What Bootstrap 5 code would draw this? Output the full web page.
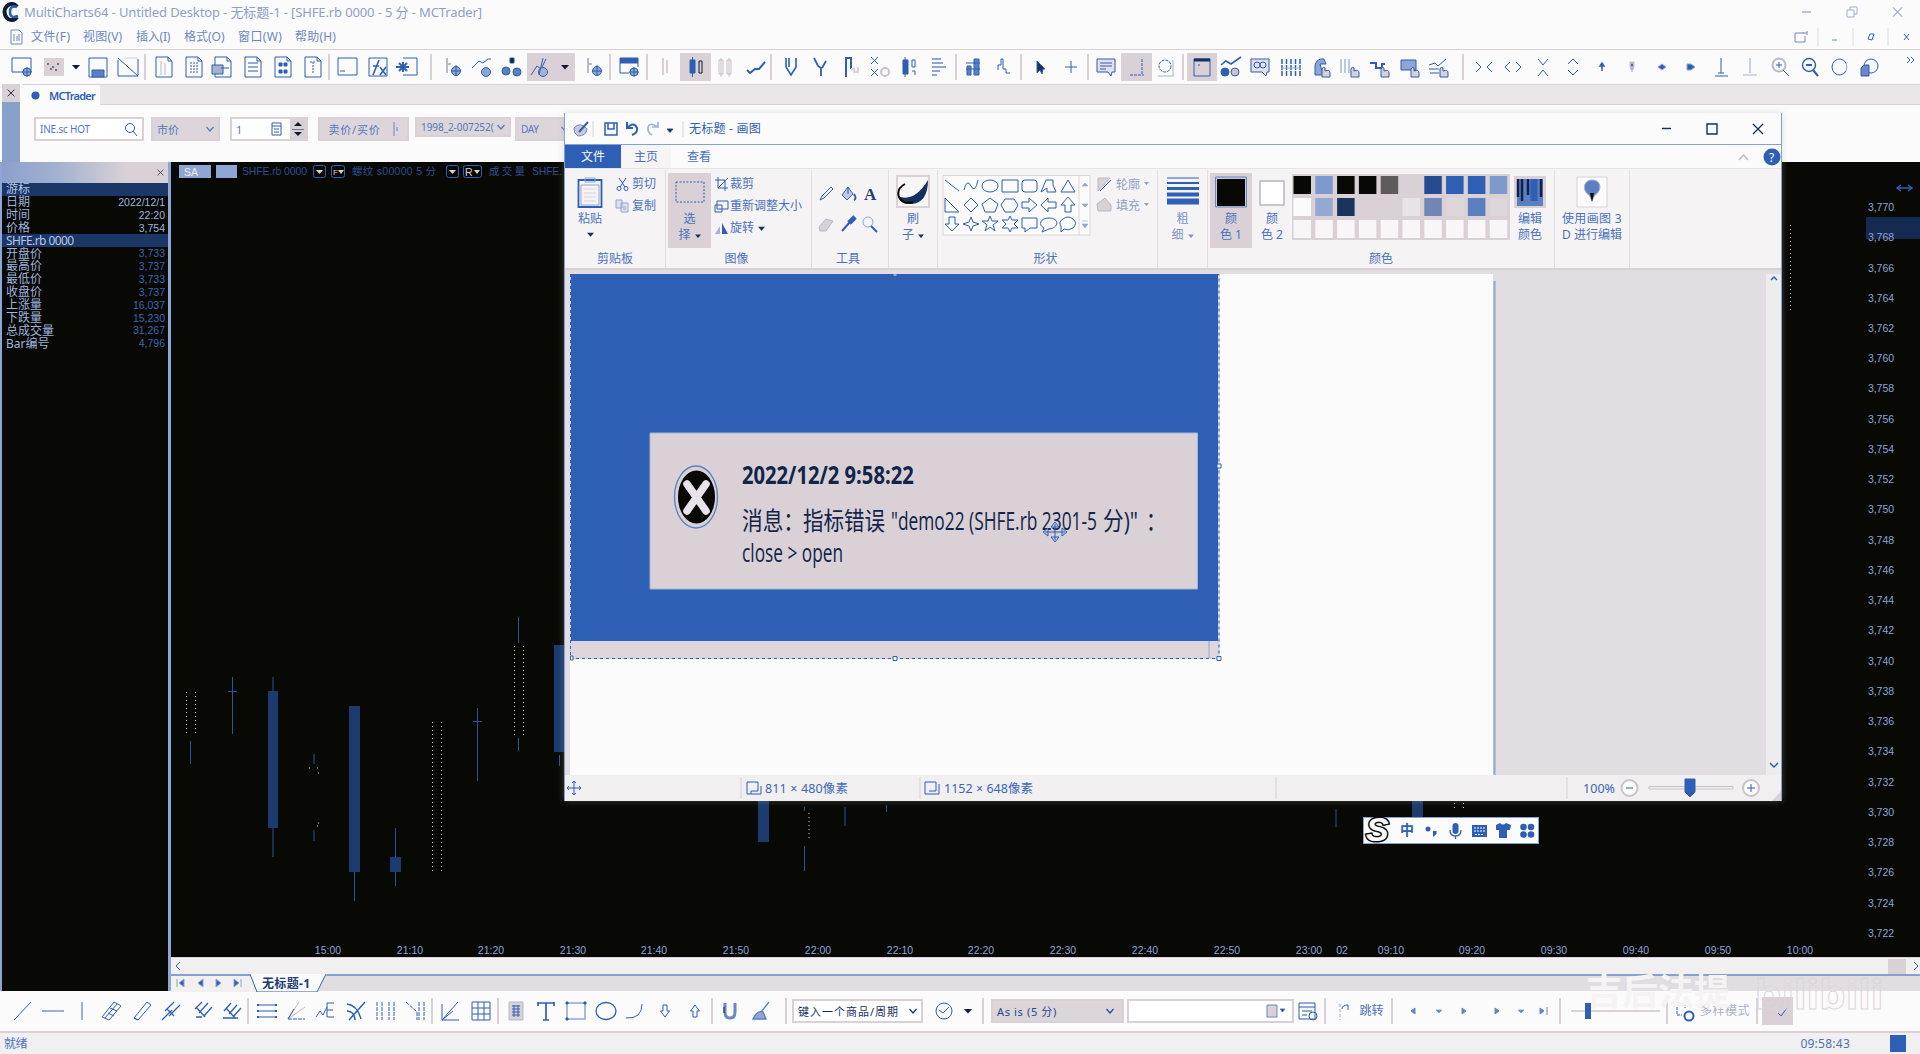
<!DOCTYPE html>
<html lang="zh-CN">
<head>
<meta charset="utf-8">
<title>MultiCharts64 - Untitled Desktop</title>
<link href="https://cdn.jsdelivr.net/npm/bootstrap@5.3.0/dist/css/bootstrap.min.css" rel="stylesheet">
<style>
:root{--paper:#fbfbfb;--ash:#d9d1d6;--mist:#ebe7e9;--ink:#2d5fb4;--night:#080804}
body{width:1920px;height:1054px;overflow:hidden;background:var(--paper);color:#4a72bc;font-family:"Noto Sans","Noto Sans CJK SC",sans-serif;font-size:12px;line-height:1}
svg{display:block;flex:none}
.lbl{white-space:nowrap;display:inline-block}
.app-title{height:24px;padding-left:2px}
.app-title .lbl{color:#8d9fca;font-size:13px}
.app-menu{height:26px;border-bottom:1px solid var(--ash);padding-left:10px}
.app-menu .lbl{font-size:12px;color:#6b88c4}
.strip{height:34px}
.slot{height:28px;display:flex;align-items:center;justify-content:center;flex:none;color:var(--ink)}
.slot.on{background:var(--ash)}
.vline{width:2px;height:26px;background:var(--ash);flex:none}
.tabband{height:21px;background:var(--mist);border-top:1px solid var(--ash);border-bottom:1px solid var(--ash)}
.tab-mc{width:78px;background:var(--paper);height:21px;color:var(--ink)}
.sidegrip{width:22px;padding-left:2px}
.sidegrip .closex{height:18px;background:var(--ash);width:18px}
.sidegrip .bar{flex:1;background:#88a1cb;width:18px}
.orderbar{height:56px;padding:12px 0 0 12px}
.fld{height:24px;border:2px solid var(--ash);background:#fff;color:#5478bd;font-size:11px}
.fld.g{background:#dcd5da}
.work{height:829px}
.data-panel{width:171px;background:var(--night);border-left:2px solid #8ea6d4;border-right:3px solid #8ea6d4;font-size:12px}
.data-head{height:21px;background:linear-gradient(90deg,#8aa0cc,#a5b2d0 35%,#d9d1d6 75%)}
.drow{height:12.85px;padding:0 3px 0 4px;color:#9fb4df}
.drow.hd{background:#1a3767;color:#b9c6e2}
.drow .v{font-family:"Liberation Sans",sans-serif;font-size:10.5px}
.drow .dim{color:#3c66b0}
.hscroll{height:17px;background:#f1eff0;border-top:1px solid var(--ash)}
.sheet{height:17px;background:#e2dde0;border-top:2px solid #86a1d0}
.statusline{background:#f1eff0;border-top:2px solid var(--ash);height:23px}
.paint{left:564px;top:113px;width:1218px;height:688px;background:var(--paper);border:1px solid #86a1d0;border-top:0;box-shadow:0 0 7px #aaa5;color:#4a72bc}
.paint-title{height:31px}
.paint-tabs{height:24px;border-top:1px solid #86a1d0}
.file-tab{width:56px;background:var(--ink);color:#fbfbfb;height:23px}
.home-tab{width:50px;background:#f6f4f5}
.ribbon{height:102px;background:#f5f3f4;border-top:1px solid #e8e4e6;border-bottom:2px solid var(--ash);padding-top:1px}
.grp{border-right:1px solid #e3dee1;height:98px;flex:none;position:relative}
.grp-body{height:81px;padding-top:3px}
.grp .cap{text-align:center;height:14px;padding-top:2px}
.tall{height:75px;text-align:center;line-height:16px}
.tall.on{background:var(--ash)}
.easel{height:505px;background:#e2dde0;padding:4px 0 0 5px}
.vbar{width:15px;background:#efecee}
.pstatus{height:26px;background:#f1eff0}
.ime{left:1363px;top:817px;width:176px;height:27px;background:var(--paper);border:1px solid #86a1d0;color:var(--ink)}
.wm{left:1586px;top:974px;font-size:36px;font-weight:700;color:#f6f3f5}
.wm2{left:1755px;top:972px;font-size:42px;font-weight:700;color:transparent;-webkit-text-stroke:1px #ddd6da}
.fs11{font-size:11px}
</style>
</head>
<body class="d-flex flex-column">
<svg width="0" height="0" class="position-absolute">
<defs>
<symbol id="wmin" viewBox="0 0 12 12"><path d="M1 6H11" stroke="currentColor" stroke-width="1.6"/></symbol>
<symbol id="wmax" viewBox="0 0 12 12"><path d="M1 1H11V11H1Z" fill="none" stroke="currentColor" stroke-width="1.4"/></symbol>
<symbol id="wres" viewBox="0 0 12 12"><path d="M1 4H8V11H1ZM4 4V1H11V8H8" fill="none" stroke="currentColor"/></symbol>
<symbol id="wx" viewBox="0 0 12 12"><path d="M1 1L11 11M11 1L1 11" fill="none" stroke="currentColor" stroke-width="1.3"/></symbol>
<symbol id="chev" viewBox="0 0 8 8"><path d="M.5 2L4 6L7.500 2" fill="none" stroke="currentColor" stroke-width="1.2"/></symbol>
<symbol id="tri" viewBox="0 0 8 8"><path d="M0 2H8L4 6.500Z" fill="currentColor"/></symbol>
</defs></svg>

<header class="app-title d-flex align-items-center">
<svg width="18" height="20" viewBox="0 0 18 20"><path d="M15 5A7 8 0 1 0 15 15" fill="none" stroke="#101a30" stroke-width="4"/><path d="M15 5Q8 3 8 10T16 14" fill="none" stroke="#2d5fb4" stroke-width="2.500"/></svg>
<span class="lbl ms-1" data-w="458">MultiCharts64 - Untitled Desktop - 无标题-1 - [SHFE.rb 0000 - 5 分 - MCTrader]</span>
<div class="d-flex ms-auto" style="color:#9fadcf;gap:34px;padding-right:17px"><svg width="11" height="12"><use href="#wmin"/></svg><svg width="12" height="12"><use href="#wres"/></svg><svg width="11" height="12"><use href="#wx"/></svg></div>
</header>
<nav class="app-menu d-flex align-items-center" id="menu">
<svg width="14" height="16" viewBox="0 0 14 16" fill="none" stroke="#6b88c4"><path d="M1 1H9L12 4V15H1ZM4 5V12M7 7V12M9 5V12"/></svg>
</nav>
<div class="strip d-flex align-items-center" id="tools"></div>

<div class="d-flex" style="height:78px">
<div class="sidegrip d-flex flex-column"><div class="closex d-flex align-items-center justify-content-center" style="color:#101a30"><svg width="8" height="8"><use href="#wx"/></svg></div><div class="bar"></div></div>
<div class="flex-grow-1">
<div class="tabband"><div class="tab-mc d-flex align-items-center"><svg width="9" height="9" style="margin:0 9px 0 9px"><circle cx="4.500" cy="4.500" r="4" fill="#2d5fb4"/></svg><span class="lbl fs11 fw-semibold" data-w="46">MCTrader</span></div></div>
<div class="orderbar d-flex">
<div class="fld d-flex align-items-center justify-content-between px-1" style="width:110px"><span class="lbl" data-w="50" style="font-size:10px">INE.sc HOT</span><svg width="14" height="14" fill="none" stroke="#2d5fb4"><circle cx="6" cy="6" r="4.500"/><path d="M9 9L13 14"/></svg></div>
<div class="fld g d-flex align-items-center justify-content-between px-1" style="width:69px;margin-left:7px"><span>市价</span><svg width="8" height="8"><use href="#chev"/></svg></div>
<div class="fld d-flex align-items-center" style="width:78px;margin-left:10px"><span class="ps-1">1</span><svg class="ms-auto" width="12" height="15" fill="none" stroke="#2d5fb4"><path d="M1 1H10V13H1ZM1 4H10M3 7H8M3 10H8"/></svg><svg width="16" height="20" style="background:#d9d1d6;margin-left:7px"><path d="M4 7L8 3L12 7ZM4 13L8 17L12 13ZM2 10H14V10.500H2Z" fill="#101a30"/></svg></div>
<div class="fld g d-flex align-items-center justify-content-center" style="width:91px;margin-left:10px;height:24px"><span class="lbl" data-w="52">卖价/买价</span><svg class="ms-1" width="14" height="16" stroke="#6b88c4" fill="none"><path d="M9 1V15M12 6V10"/></svg></div>
<div class="fld g d-flex align-items-center px-1" style="width:96px;margin-left:6px;height:20px"><span class="lbl" data-w="73" style="font-size:10px">1998_2-007252(</span><svg class="ms-auto" width="8" height="8"><use href="#chev"/></svg></div>
<div class="fld g d-flex align-items-center px-1" style="width:60px;margin-left:4px;height:24px"><span class="lbl" data-w="18" style="font-size:10px">DAY</span><svg class="ms-auto" width="8" height="8"><use href="#chev"/></svg></div>
</div></div></div>

<main class="work d-flex">
<aside class="data-panel d-flex flex-column"><div class="data-head d-flex align-items-center justify-content-end pe-1" style="color:#25324e"><svg width="7" height="7"><use href="#wx"/></svg></div><div id="rows"></div></aside>
<section class="flex-grow-1 d-flex flex-column">
<svg id="chart" width="1749" height="795" viewBox="171 161 1749 795" style="background:#080804" font-family="Liberation Sans,Noto Sans CJK SC,sans-serif" font-size="10.500"></svg>
<div class="hscroll d-flex align-items-center justify-content-between"><svg width="16" height="10" fill="none" stroke="#2d5fb4"><path d="M9 1L5 5L9 9"/></svg><div class="d-flex"><div style="width:18px;height:15px;background:#d9d1d6;margin-right:5px"></div><svg width="9" height="14" fill="none" stroke="#2d5fb4"><path d="M3 3L7 7L3 11"/></svg></div></div>
<div class="sheet"><svg width="160" height="18" style="margin-top:-2px" viewBox="0 0 160 18"><path d="M0 0H156L146 18H0Z" fill="#f1eff0"/><path d="M79 0L86 18H146L155 0" fill="#fbfbfb" stroke="#2d5fb4"/><path d="M0 1H79" stroke="#86a1d0" stroke-width="2"/><path d="M6 5V13M13 5L8 9L13 13ZM32 5L27 9L32 13ZM45 5L50 9L45 13ZM63 5L68 9L63 13ZM70 5V13" fill="#2d5fb4" stroke="#8ea6d4"/><text x="91" y="13.500" textLength="48" font-size="12" font-weight="700" fill="#1c3d78">无标题-1</text></svg></div>
</section>
</main>
<div class="d-flex align-items-center" id="draw" style="height:40px"></div>
<footer class="statusline d-flex align-items-center"><span class="lbl ms-1" data-w="23">就绪</span><span class="lbl ms-auto" data-w="50" style="margin-right:40px">09:58:43</span><svg width="16" height="17" style="margin-right:14px"><path d="M0 0H16V17H0Z" fill="#2d5fb4"/></svg></footer>

<section class="paint position-absolute">
<div class="paint-title d-flex align-items-center"><svg id="qa" width="120" height="24" viewBox="565 117 120 24" fill="none" stroke="#2d5fb4"><path d="M574 128Q580 121 587 129Q586 136 578 136Q573 133 574 128Z" fill="#c9c9d8" stroke="#6b88c4"/><path d="M579 132L588 122" stroke-width="2"/><path d="M593 121V137M683 121V137" stroke="#d9d1d6"/><path d="M605 123H617V135H605ZM608 123V129H614V123" stroke-width="1.500"/><path d="M627 122V128H633M627 128Q634 121 637 128Q638 133 632 135" stroke-width="2"/><path d="M658 122V127H652M658 127Q648 121 648 129Q648 133 652 135" stroke="#a5b2d0" stroke-width="1.700"/><path d="M667 129H673L670 132.500Z" fill="#101a30"/></svg><span class="lbl" data-w="72" style="margin-left:4px;color:#2d5fb4">无标题 - 画图</span>
<div class="d-flex ms-auto align-items-center" style="gap:34px;margin-right:17px;color:#14305f"><svg width="11" height="11"><use href="#wmin"/></svg><svg width="12" height="12"><use href="#wmax"/></svg><svg width="12" height="12"><use href="#wx"/></svg></div></div>
<div class="paint-tabs d-flex"><div class="file-tab d-flex align-items-center justify-content-center">文件</div><div class="home-tab d-flex align-items-center justify-content-center">主页</div><div class="d-flex align-items-center" style="padding-left:16px">查看</div><div class="ms-auto d-flex align-items-center" style="gap:13px;padding-right:0"><svg width="12" height="8" fill="none" stroke="#b9b9cb" stroke-width="1.500"><path d="M1 7L5.500 2L10 7"/></svg><svg width="18" height="18"><circle cx="9" cy="9" r="8.500" fill="#2d5fb4"/><text x="6" y="13.500" font-size="12" fill="#fbfbfb">?</text></svg></div></div>
<div class="ribbon d-flex">
 <div class="grp" style="width:101px"><div class="grp-body d-flex"><div class="tall" style="width:50px"><svg class="mx-auto mt-1" width="26" height="34" viewBox="0 0 26 34" fill="none" stroke="#2d5fb4"><path d="M1.500 3H24.500V30H1.500Z" stroke-width="1.800"/><path d="M8 1H18V5H8ZM4 8H22V28H4Z" stroke="#8ea6d4"/><path d="M7 12H19M7 16H19M7 20H19M7 24H19" stroke="#d9d1d6"/></svg>粘贴<svg class="mx-auto mt-1" width="7" height="7" style="color:#14305f"><use href="#tri"/></svg></div>
 <div class="d-flex flex-column" style="gap:8px;padding-top:4px"><div class="d-flex align-items-center"><svg width="17" height="14" fill="none" stroke="#2d5fb4"><path d="M4 1L10 10M11 1L5 10"/><circle cx="4" cy="11.500" r="2"/><circle cx="11" cy="11.500" r="2"/></svg>剪切</div><div class="d-flex align-items-center"><svg width="17" height="14" fill="#e4e0e6" stroke="#8ea6d4"><path d="M1 1H7V9H1ZM6 4H13V13H6ZM8 8H11M8 10H11"/></svg>复制</div></div></div><div class="cap">剪贴板</div></div>
 <div class="grp" style="width:146px"><div class="grp-body d-flex"><div class="tall on" style="width:43px;margin-left:2px"><svg class="mx-auto" width="32" height="38" fill="none" stroke="#2d5fb4"><path d="M2 9H30V29H2Z" stroke-dasharray="2 1.500"/></svg>选<br>择<svg class="d-inline ms-1" width="6" height="6" style="color:#14305f"><use href="#tri"/></svg></div>
 <div class="d-flex flex-column" style="gap:8px;padding:4px 0 0 3px"><div class="d-flex align-items-center"><svg width="16" height="14" fill="none" stroke="#2d5fb4"><path d="M4 0V11H14M1 3H11V14M4 11L14 1"/></svg>裁剪</div><div class="d-flex align-items-center"><svg width="16" height="14" fill="none" stroke="#2d5fb4"><path d="M3 2H14V10H3ZM1 6H8V13H1Z"/></svg>重新调整大小</div><div class="d-flex align-items-center"><svg width="16" height="14"><path d="M1 13L6 5V13Z" fill="#a5b2d0"/><path d="M8 2L14 13H8Z" fill="#2d5fb4"/></svg>旋转<svg width="7" height="7" class="ms-1" style="color:#14305f"><use href="#tri"/></svg></div></div></div><div class="cap pe-1">图像</div></div>
 <div class="grp" style="width:77px"><div class="grp-body"><svg width="76" height="70" viewBox="812 173 76 70" fill="none" stroke="#2d5fb4"><path d="M820 200L822 196L831 187L833 189L824 198Z"/><path d="M842 195L848 187L853 194L847 200ZM848 187V194" fill="#c5c9de"/><path d="M854 194Q857 199 854 200" stroke-width="2"/><text x="864" y="200" font-family="Liberation Serif" font-size="17" font-weight="700" fill="#1c3d78" stroke="none">A</text><path d="M819 227L826 219L833 221L826 231L820 231Z" fill="#d9d1d6" stroke="#b9b9cb"/><path d="M842 231L850 222" stroke-width="2"/><path d="M849 223L855 217" stroke-width="5"/><circle cx="868" cy="222" r="5" stroke="#8ea6d4"/><path d="M871 226L877 232" stroke-width="2"/></svg></div><div class="cap pe-1">工具</div></div>
 <div class="grp" style="width:49px"><div class="grp-body"><div class="tall"><svg class="mx-auto" width="34" height="38" viewBox="0 0 34 38"><path d="M1 3H33V34H1Z" fill="#f7f5f6" stroke="#d9d1d6" stroke-width="2"/><path d="M32 7Q32 30 15 31Q5 32 2 23Q18 30 32 7Z" fill="#14305f"/><path d="M9 11Q0 16 3 24Q7 32 17 29" fill="none" stroke="#080804" stroke-width="2"/></svg>刷<br>子<svg class="d-inline ms-1" width="6" height="6" style="color:#14305f"><use href="#tri"/></svg></div></div></div>
 <div class="grp" style="width:220px"><div class="grp-body"><svg width="219" height="75" viewBox="938 173 219 75" fill="none" stroke="#2d5fb4"><path d="M943 175.500H1090V235H943ZM1079 175V235" stroke="#dcd6da" fill="#fbfbfb"/>
 <path d="M945 180L959 191M964 190Q967 178 971 186T978 180"/><ellipse cx="990" cy="186" rx="8" ry="6"/><path d="M1002 180H1018V192H1002Z"/><rect x="1022" y="180" width="15" height="12" rx="3"/><path d="M1041 192L1046 180H1053V185L1056 192H1047V188ZM1061 192L1068 180L1075 192Z"/>
 <path d="M945 198V212H959ZM971 198L978 205L971 212L964 205ZM990 198L998 204L995 212H985L982 204ZM1005 199H1014L1018 205L1014 212H1005L1001 205ZM1022 202H1029V198L1037 205L1029 212V208H1022ZM1056 202H1048V198L1041 205L1048 212V208H1056ZM1065 212V205H1061L1068 197L1075 205H1071V212Z"/>
 <path d="M949 217H955V224H959L952 231L945 224H949ZM971 217L973 222L979 224L973 226L971 231L969 226L963 224L969 222ZM990 216L992 221L998 221L993 225L995 231L990 227L985 231L987 225L982 221L988 221ZM1010 216L1012 220H1018L1014 224L1018 228H1012L1010 232L1008 228H1002L1006 224L1002 220H1008ZM1022 218H1037V228H1030L1025 232V228H1022Z"/><path d="M1049 218C1060 218 1059 228 1049 229L1042 232L1044 228C1038 225 1040 218 1049 218ZM1063 219Q1068 215 1073 219Q1078 223 1073 228Q1068 231 1064 229L1061 232V226Q1058 222 1063 219Z"/><path d="M1082 186H1088L1085 183ZM1082 204H1088L1085 207ZM1082 221H1088M1082 224H1088L1085 228Z" fill="#8ea6d4" stroke="#8ea6d4" stroke-width=".6"/>
 <path d="M1098 178H1110L1098 191Z" fill="#d9d1d6" stroke="#b9b9cb"/><path d="M1100 191L1111 180"/><path d="M1097 204L1105 198L1111 205V211H1098Z" fill="#d9d1d6" stroke="#b9b9cb"/><g fill="#8ea0cb" stroke="none" font-size="12"><text x="1116" y="188.500">轮廓</text><text x="1116" y="209.500">填充</text><path d="M1144 182H1149L1146.500 185ZM1144 203H1149L1146.500 206Z"/></g></svg></div><div class="cap pe-1">形状</div></div>
 <div class="grp" style="width:50px"><div class="grp-body"><div class="tall" style="color:#8094c4"><svg class="mx-auto" width="32" height="38"><path d="M0 5H32" stroke="#2d5fb4"/><path d="M0 10H32" stroke="#2d5fb4" stroke-width="2"/><path d="M0 15.500H32" stroke="#2d5fb4" stroke-width="3"/><path d="M0 21.500H32" stroke="#2d5fb4" stroke-width="4"/><path d="M0 28.500H32" stroke="#2d5fb4" stroke-width="6"/></svg>粗<br>细<svg class="d-inline ms-1" width="6" height="6"><use href="#tri"/></svg></div></div></div>
 <div class="grp" style="width:347px"><div class="grp-body d-flex"><div class="tall on" style="width:42px;margin-left:2px"><svg class="mx-auto" width="34" height="38"><path d="M1.500 4H32.500V34H1.500Z" fill="#c3cbe0" stroke="#6b88c4"/><path d="M3 6H31V33H3Z" fill="#080804"/></svg>颜<br>色 1</div><div class="tall" style="width:40px"><svg class="mx-auto" width="28" height="38"><path d="M2 8H26V32H2Z" fill="#fff" stroke="#c9c3cc" stroke-width="2"/></svg>颜<br>色 2</div>
 <svg id="palette" width="218" height="68"></svg>
 <div class="tall" style="width:40px"><svg class="mx-auto" width="32" height="38"><path d="M0 3H32V35H0Z" fill="#d9d1d6"/><path d="M3 6H29V33H3Z" fill="#5b80c2"/><path d="M4 6V24M8 6V28M14 6V22M27 6V24" stroke="#14204a" stroke-width="2.500"/><path d="M20 6V28" stroke="#2d5fb4" stroke-width="7"/></svg>编辑<br>颜色</div></div><div class="cap">颜色</div></div>
 <div class="grp" style="width:75px"><div class="grp-body"><div class="tall"><svg class="mx-auto" width="32" height="38"><path d="M1 4H31V34H1Z" fill="#fbfbfb" stroke="#d9d1d6"/><path d="M16 7C26 7 26 18 19 22L16 28L13 22C6 18 7 7 16 7Z" fill="#5b80c2" stroke="#a5b2d0"/><path d="M14 20H18L16 29Z" fill="#080804"/></svg><span class="lbl" data-w="60">使用画图 3</span><br><span class="lbl" data-w="60">D 进行编辑</span></div></div></div>
</div>
<div class="easel d-flex"><svg width="1196" height="501" viewBox="570 274 1196 501" font-family="Open Sans,Noto Sans CJK SC,sans-serif">
<path d="M570 274H1493V775H570Z" fill="#fbfbfb"/><path d="M1494.500 281V775" stroke="#8ea6d4" stroke-width="2"/>
<path d="M570 274H1218V641H570Z" fill="#2d5fb4"/><path d="M570 641H1219V659H570Z" fill="#ddd6da"/><path d="M1209 641V659" stroke="#8ea6d4"/>
<path d="M570.500 274V659M570 658.500H1219V274" fill="none" stroke="#c8cde0"/><path d="M570.500 274V659M570 658.500H1219V274.500H570" fill="none" stroke="#2d5fb4" stroke-dasharray="3 3"/>
<g fill="#fbfbfb" stroke="#2d5fb4"><path d="M570.500 656H573V660H570.500ZM893 656.500H897V660.500H893ZM1217 656.500H1221V660.500H1217ZM1217 464H1221V468H1217ZM893 274H897V276H893Z"/></g>
<path d="M650 433H1197.500V589H650Z" fill="#d9d1d6" stroke="#a5b4d6"/>
<ellipse cx="696" cy="497" rx="21.500" ry="31" fill="#d9d1d6" stroke="#5b80c2" stroke-width="1.300"/><ellipse cx="696.500" cy="497" rx="18.500" ry="26.500" fill="#080804"/><path d="M687 484L706 511M706 484L687 511" stroke="#e7e3e8" stroke-width="7.500" stroke-linecap="round"/>
<g fill="#11244a"><text transform="translate(742 484) scale(.62 1)" font-size="25.500" font-weight="700" textLength="277" lengthAdjust="spacingAndGlyphs">2022/12/2 9:58:22</text>
<g font-size="25"><text x="742" y="530" textLength="62" lengthAdjust="spacingAndGlyphs">消息：</text><text x="803" y="530" textLength="82" lengthAdjust="spacingAndGlyphs">指标错误</text><text x="891" y="530" textLength="206" lengthAdjust="spacingAndGlyphs">"demo22 (SHFE.rb 2301-5</text><text x="1103" y="530" textLength="35" lengthAdjust="spacingAndGlyphs">分)"</text><text x="1146" y="530" textLength="20" lengthAdjust="spacingAndGlyphs">：</text><text x="742" y="562" textLength="101" lengthAdjust="spacingAndGlyphs">close &gt; open</text></g></g>
<path d="M1055 524V540M1045 532H1065M1055 522L1051 527H1059ZM1055 542L1051 537H1059ZM1043 532L1048 528V536ZM1067 532L1062 528V536Z" fill="#c3cbe0" stroke="#2d5fb4"/>
</svg><div class="vbar d-flex flex-column justify-content-between align-items-center"><svg width="10" height="10" fill="none" stroke="#2d5fb4" stroke-width="1.500"><path d="M2 6L5 3L8 6"/></svg><svg width="10" height="16" fill="none" stroke="#2d5fb4" stroke-width="1.500"><path d="M1 4L5 8L9 4"/></svg></div></div>
<div class="pstatus"><svg width="1216" height="26" viewBox="565 774 1216 26" fill="none" stroke="#2d5fb4"><path d="M574 780V794M567 787H581M572 782L574 780L576 782M572 792L574 794L576 792M569 785L567 787L569 789M579 785L581 787L579 789"/><path d="M741 776V798M920 776V798M1276 776V798M1567 776V798" stroke="#d9d1d6"/><path d="M747 781H758V790H751V793M747 781V793H761V785M925 781H936V790H929M925 781V793H939V783"/><path d="M1649 785.500H1733V788H1649Z" stroke="#c9c3cc"/><path d="M1685 778H1695V791L1690 796L1685 791Z" fill="#2d5fb4"/><ellipse cx="1629.500" cy="787" rx="8" ry="8" fill="#fbfbfb" stroke="#c9c3cc" stroke-width="2"/><ellipse cx="1751" cy="787" rx="8" ry="8" fill="#fbfbfb" stroke="#c9c3cc" stroke-width="2"/><path d="M1626 787H1633M1747 787H1755M1751 783V791"/><path d="M1781 790V800H1772Z" fill="#d9d1d6" stroke="none"/><g fill="#3b68b6" stroke="none" font-size="12.500"><text x="765" y="792" textLength="83">811 × 480像素</text><text x="944" y="792" textLength="89">1152 × 648像素</text><text x="1583" y="792" textLength="32">100%</text></g></svg></div>
</section>

<div class="ime position-absolute"><svg width="176" height="27" viewBox="1363 817 176 27" overflow="visible"><text x="1365" y="840" font-family="Liberation Sans" font-size="34" font-weight="700" font-style="italic" fill="#fbfbfb" stroke="#080804" stroke-width="3" paint-order="stroke">S</text><g fill="#2d5fb4"><text x="1399" y="834" font-size="14" font-weight="700">中</text><circle cx="1427" cy="828" r="2.500"/><path d="M1432 830H1435.500V833L1432 836Z"/><rect x="1451.500" y="822" width="6" height="11" rx="3"/><path d="M1449 829Q1449 835 1454.500 835T1460 829M1454.500 835V838" fill="none" stroke="#2d5fb4" stroke-width="1.300"/><path d="M1471 824H1486V836H1471Z"/><path d="M1473 827H1484M1473 830H1484M1474 833.500H1483" stroke="#fbfbfb" stroke-dasharray="2 1"/><path d="M1495 824L1499 822Q1502 825 1505 822L1510 824L1509 829H1506V837H1498V829H1495Z"/><circle cx="1522.500" cy="826" r="3.300"/><circle cx="1530" cy="826" r="3.300"/><circle cx="1522.500" cy="833.500" r="3.300"/><circle cx="1530" cy="833.500" r="3.300"/></g></svg></div>
<div class="wm position-absolute">吉后法提</div><div class="wm2 position-absolute">bilibili</div>

<script>
// Icon bodies on a 24x24 grid, stroked with the text colour
const badge='<circle cx="17" cy="17" r="4" fill="#8ea6d4"/><path d="M17 12V22M12 17H22"/>';
const page='<path d="M4 2H16L20 6V22H4Z"/><path d="M16 2V6H20"/>';
const hand='<path d="M13 22V14Q14 11 16 13V16Q21 14 21 18V22Z" fill="#d9d1d6"/>';
const IC={
new:'<path d="M2 3H21V17H2Z"/>'+badge, ws:'<path d="M2 3H22V21H2Z" fill="#d9d1d6" stroke="none"/><path d="M5 9H7M10 12H12M15 9H17M8 14H10M13 15H15" stroke="#101a30"/>',
save:'<path d="M3 3H21V22H3Z"/><path d="M6 15H18V22H6Z" fill="#5b80c2"/>', close:'<path d="M2 3L22 21M2 5V21H22M22 4V20" /><path d="M8 3H22" stroke="#d9d1d6"/>',
p1:page+'<path d="M9 6V20M13 8V20" stroke="#b9b9cb"/>',p2:page+'<path d="M8 8H16M8 11H16M8 14H16M8 17H16" stroke-dasharray="2 1"/>',p3:page+'<path d="M1 10H12V19H1Z" fill="#a5b2d0"/><path d="M10 13H18"/>',p4:page+'<path d="M7 8H17M7 12H17M7 16H17"/>',p5:page+'<path d="M8 8H11V11H8ZM13 8H16V11H13ZM8 15H11V18H8ZM13 15H16V18H13Z" fill="#2d5fb4"/>',p6:page+'<path d="M9 7H15M12 7V18" stroke-dasharray="2 1"/>',
win:'<path d="M2 3H21V20H2Z"/><path d="M4 16H9"/>',fx:'<path d="M3 3H21V21H3Z"/><path d="M7 20L13 5M7 11H13M14 12L20 20M20 12L14 20" stroke-width="1.600"/>',inp:'<path d="M8 3H22V20H8"/><path d="M1 12H14M8 7V17M4 8L12 16M12 8L4 16" stroke-width="2"/>',
a1:'<path d="M5 3V18M5 9H9" stroke="#b9b9cb" stroke-width="2"/><circle cx="14" cy="16" r="4.500" fill="#8ea6d4"/><path d="M14 10V21M9 16H19"/>',a2:'<path d="M1 13L8 6L12 8L17 4M17 4H20"/><circle cx="15" cy="17" r="4.500" fill="#8ea6d4"/>',a3:'<path d="M10 3H14V8H10Z" fill="#101a30"/><circle cx="6" cy="16" r="4" fill="#5b80c2"/><circle cx="17" cy="17" r="4" fill="#5b80c2"/>',a4:'<path d="M2 20L8 11L12 14L17 4"/><circle cx="14" cy="17" r="4.500" fill="#a5b2d0"/><path d="M14 3L10 20"/>',
cfg:'<path d="M3 3H21V8H3Z" fill="#2d5fb4"/><path d="M3 8V18H12M21 8V12"/>'+badge,
bar:'<path d="M10 3V20M14 5V18" stroke="#d9d1d6" stroke-width="2"/>',can:'<path d="M6 5H11V18H6Z" fill="#2d5fb4"/><path d="M8.500 2V22"/><path d="M15 6H18V18H15Z" stroke="#101a30"/>',can2:'<path d="M6 5H10V19H6ZM14 5H18V19H14ZM8 3V22M16 3V22" stroke="#c5bec5"/>',wave:'<path d="M3 15L6 18L11 14L15 14L21 7" stroke-width="2"/>',
v1:'<path d="M7 3V12L12 20L17 12V3M10 3V12" stroke-width="1.600"/>',v2:'<path d="M6 3L10 11L13 13V21M18 6L14 13" stroke-width="1.800"/>',v3:'<path d="M7 22V3H12V14" stroke-width="2"/><path d="M12 14H15V17H19V12" stroke="#d9d1d6" stroke-width="2"/>',xo:'<path d="M3 2L10 9M10 2L3 9M3 14L10 21M10 14L3 21"/><circle cx="17" cy="17" r="4" stroke="#c9c3cc" stroke-width="2"/>',vp:'<path d="M6 5H11V19H6Z" fill="#2d5fb4"/><path d="M8 2V22M15 5H18V12H15ZM15 16H18V20"/>',hp:'<path d="M6 4H15M6 8H17M6 12H20M6 16H14M6 20H11" stroke="#8ea6d4" stroke-width="2"/>',
lv:'<path d="M5 11H9V20H5ZM12 4H17V20H12Z" fill="#5b80c2"/><path d="M4 14H18M4 8H18"/>',st:'<path d="M6 15V10H9V4H11V14H14V18H18" />',
cur:'<path d="M9 6L9 18L12 15L14 19L15 14L17 14Z" fill="#14305f"/>',plus:'<path d="M12 6V18M6 12H18"/>',
tip:'<path d="M3 4H21V17H18L17 21L14 17H3Z" fill="#e4e0e6"/><path d="M6 8H18M6 11H18M6 14H12"/>',lsh:'<path d="M6 20H20M18 4V20" stroke-dasharray="3 1"/>',zo2:'<circle cx="11" cy="11" r="6" stroke-dasharray="3 1"/><path d="M4 21H20M19 5V20" stroke="#a5b2d0"/>',
wnd:'<path d="M4 4H20V21H4Z" fill="#d9d1d6"/><path d="M4 5H20" stroke="#14305f" stroke-width="3"/><path d="M8 10H10"/>',ind:'<path d="M2 10L7 6L12 9L22 2" stroke-width="1.600"/><circle cx="6" cy="17" r="4" fill="#2d5fb4"/><circle cx="16" cy="17" r="4" fill="#c9c3cc"/>',tip2:'<path d="M3 4H21V17H19L18 21L14 17H3Z" fill="#e4e0e6"/><circle cx="9" cy="10" r="3"/><circle cx="15" cy="10" r="3"/>',
grid:'<path d="M3 4V21M7.500 4V21M12 4V21M16.500 4V21M21 4V21" stroke-width="1.500" stroke-dasharray="5 1"/><path d="M2 13H22" stroke="#a5b2d0"/>',
h1:'<path d="M6 20V10Q8 3 15 4L17 9H11L14 20Z" fill="#8ea6d4"/>'+hand,h2:'<path d="M3 4V18M7 4V18M11 4V18" stroke="#8094c4"/>'+hand,h3:'<path d="M2 8H8V13H14V9H17" stroke-width="2"/>'+hand,h4:'<path d="M3 5H18V15H3Z" fill="#8ea6d4"/>'+hand,h5:'<path d="M2 10L8 8L11 11L19 4M2 14H12M3 18H12"/>'+hand,
xin:'<path d="M4 7L9 12L4 17M20 7L15 12L20 17"/>',xout:'<path d="M9 7L4 12L9 17M15 7L20 12L15 17"/>',yin:'<path d="M7 4L12 10L17 4M7 21L12 15L17 21"/>',yout:'<path d="M7 9L12 4L17 9M7 15L12 20L17 15"/>',
k1:'<path d="M12 8L10 11H14ZM12 16V9" fill="#2d5fb4" stroke-width="1.500"/>',k2:'<path d="M10 7H14V12L12 17L10 12Z" fill="#a5b2d0" stroke="#c9c3cc"/><path d="M11 10H13" stroke="#101a30"/>',k3:'<path d="M8 12L12 9L16 12L12 15Z" fill="#2d5fb4" stroke="#8ea6d4"/>',k4:'<path d="M8 9H12L16 12L12 15H8Z" fill="#2d5fb4" stroke="#8ea6d4"/>',
an:'<path d="M12 3V18M9 18H15M6 21H19"/>',an2:'<path d="M12 3V18" stroke="#8ea6d4"/><path d="M5 20H19" stroke="#a5b2d0"/>',
zi:'<circle cx="11" cy="10" r="6.500" stroke="#b9b9cb" stroke-width="2"/><path d="M8 10H14M11 7V13M15 15L21 21"/>',zo:'<circle cx="11" cy="10" r="6.500" stroke-width="1.400"/><path d="M8 10H14M15 15L20 21" stroke-width="2"/>',cir:'<path d="M19 8A7.500 8 0 1 0 19 16"/><path d="M19 8Q21 12 19 16" stroke="#8ea6d4"/>',cir2:'<circle cx="14" cy="11" r="7"/><path d="M4 21V13L7 10H12V21Z" fill="#6b88c4"/>',
dn:'<path d="M8 10H16L12 14.500Z" fill="#101a30" stroke="none"/>',
l1:'<path d="M3 21L20 3"/>',l2:'<path d="M3 12H21" stroke="#8094c4" stroke-width="1.500"/><path d="M2 11V13M22 11V13"/>',l3:'<path d="M12 3V21" stroke="#8094c4" stroke-width="1.500"/>',
ch1:'<path d="M2 18L14 3L21 7L9 21ZM5 19L17 5M8 14L14 17M10 9L17 12"/>',ch2:'<path d="M4 19L17 3L21 6L8 21ZM4 19L8 21"/>',pf:'<path d="M2 21L12 11M5 12L14 3M9 17L20 6M7 10L14 17" stroke-width="1.300"/>',pf2:'<path d="M4 10L11 3M8 14L17 4M13 17L21 8M5 8L14 18M5 18H11" stroke-width="1.300"/>',pf3:'<path d="M4 12L11 4M9 15L17 6M13 18L21 9M3 19H18M6 9L15 19" stroke-width="1.300"/>',
fh:'<path d="M4 6H20M4 12H20M4 18H20"/><path d="M3 5V7M21 5V7M3 11V13M21 11V13M3 17V19M21 17V19" stroke-width="2"/>',fan:'<path d="M3 20L14 3M3 20L20 8" stroke="#b9b9cb"/><path d="M3 20H20" stroke-dasharray="4 1"/><path d="M3 20L9 10"/>',ell:'<path d="M2 18L6 12L9 16L13 8M13 4V18M13 4H20M13 11H19M13 18H20"/>',arc:'<path d="M3 5Q13 6 17 20M3 12Q10 12 11 21M5 21L21 3" stroke-width="1.500"/>',tz:'<path d="M3 3V21M8 3V21M20 3V21M15 3V21" stroke-dasharray="4 1"/>',tz2:'<path d="M2 3L13 13V21M15 3V21M20 3V21" stroke-dasharray="4 1"/>',ga:'<path d="M3 21L19 3M3 21H20M3 5V21M3 21L14 12"/>',gd:'<path d="M3 3H21V21H3ZM9 3V21M15 3V21M3 9H21M3 15H21"/>',
cal:'<path d="M5 3H19V21H5Z" fill="#d9d1d6" stroke="#b9b9cb"/><path d="M8 7H16M8 10H16M8 13H16M8 16H16M10 6V18M14 6V18"/>',T:'<path d="M4 4H20M12 4V21M4 3V7M20 3V7M9 21H15" stroke-width="1.700"/>',rc:'<path d="M3 4H21V20H3Z" stroke="#8ea6d4" stroke-width="1.500"/><path d="M2 3H4V5H2ZM20 3H22V5H20ZM2 19H4V21H2Z" fill="#2d5fb4"/>',el:'<ellipse cx="12" cy="12" rx="10" ry="8.500" stroke-width="1.300"/>',cv:'<path d="M3 19Q19 20 19 5"/>',ad:'<path d="M10 6H14V12H16.500L12 18L7.500 12H10Z"/>',au:'<path d="M10 18H14V12H16.500L12 6L7.500 12H10Z"/>',mag:'<path d="M7 4V13Q7 19 12 19T17 13V4" stroke-width="3" stroke="#6b88c4"/><path d="M6 8V14" stroke="#101a30"/>',br:'<path d="M20 3L12 13M4 20Q8 11 14 13L17 20Z" fill="#8ea6d4" stroke="#5b80c2" stroke-width="1.400"/>',
clk:'<circle cx="12" cy="12" r="8"/><path d="M7 11L11 14L17 8"/>',tbl:'<path d="M4 4H20V20H4ZM4 8H20M7 12H17M7 16H12"/><circle cx="18" cy="17" r="4"/>',fl:'<path d="M7 5V21" stroke-dasharray="3 2" stroke="#8ea6d4"/><path d="M9 10Q9 6 15 6V11"/>',
al:'<path d="M14 9L10 12L14 15Z" fill="#5b80c2" stroke="#6b88c4"/>',ar:'<path d="M10 9L14 12L10 15Z" fill="#5b80c2" stroke="#6b88c4"/>',are:'<path d="M9 9L13 12L9 15ZM16 8V16" fill="#5b80c2" stroke="#6b88c4"/>',dot:'<path d="M9 11H15L12 14Z" fill="#6b88c4" stroke="#8ea6d4"/>',
gear:'<path d="M4 4H12V9M4 4V16H9" stroke-dasharray="3 1"/><circle cx="16" cy="17" r="4.500" stroke-width="2"/>',chk:'<path d="M12 14L15 17L21 9"/>',
dbl:'<path d="M8 2L11 5L8 8M12 2L15 5L12 8"/>'};
// Lay toolbar entries out left to right: each entry is [centre, icon, slot width, class]
function fill(id,list){let end=0,h='';
 for(const [x,n,w0,c] of list){let w=w0||(n=='|'?2:24),gap=x-w/2-end;end=x+w/2;
  if(n=='|')h+=`<div class="vline" style="margin-left:${gap}px"></div>`;
  else if(n[0]=='<')h+=`<div style="margin-left:${gap}px;width:${w}px;flex:none">${n}</div>`;
  else h+=`<div class="slot ${c||''}" style="margin-left:${gap}px;width:${w}px"><svg width="24" height="24" viewBox="0 0 24 24" fill="none" stroke="currentColor">${IC[n]}</svg></div>`;}
 document.getElementById(id).innerHTML=h;}
fill('tools',[[22,'new'],[54,'ws'],[75.5,'dn',12],[98,'save'],[128,'close'],[145,'|'],[164,'p1'],[194,'p2'],[223,'p3'],[253,'p4'],[283,'p5'],[313,'p6'],[329,'|'],[348,'win'],[377.5,'fx'],[407,'inp'],[431,'|'],[454,'a1'],[483,'a2'],[512,'a3'],[541,'a4',29,'on'],[565,'dn',19,'on'],[595,'a1'],[610,'|'],[629,'cfg'],[647,'|'],[665,'bar'],[695.5,'can',31,'on'],[724.5,'can2'],[755.5,'wave'],[771,'|'],[790.6,'v1'],[819.6,'v2'],[851,'v3'],[879.6,'xo'],[909,'vp'],[938,'hp'],[956,'|'],[974,'lv'],[1004.5,'st'],[1021,'|'],[1040,'cur'],[1070.6,'plus'],[1088,'|'],[1106,'tip'],[1136.500,'lsh',31,'on'],[1165.7,'zo2'],[1183,'|'],[1202,'wnd',30,'on'],[1230.6,'ind'],[1260.4,'tip2'],[1291,'grid'],[1321,'h1'],[1350,'h2'],[1380,'h3'],[1410,'h4'],[1439,'h5'],[1463,'|'],[1484,'xin'],[1513.5,'xout'],[1543,'yin'],[1572.7,'yout'],[1602,'k1'],[1632,'k2'],[1662,'k3'],[1690.6,'k4'],[1721,'an'],[1750,'an2'],[1780.4,'zi'],[1810,'zo'],[1839.6,'cir'],[1869.4,'cir2'],[1911,'dbl',16]]);
fill('draw',[[23,'l1'],[53,'l2'],[82,'l3'],[112,'ch1'],[142,'ch2'],[172,'pf'],[203,'pf2'],[232,'pf3'],[248,'|'],[267,'fh'],[297,'fan'],[326,'ell'],[356,'arc'],[386,'tz'],[415.500,'tz2'],[432,'|'],[451,'ga'],[481,'gd'],[498,'|'],[516,'cal'],[546,'T'],[576,'rc'],[606,'el'],[635,'cv'],[665,'ad'],[695,'au'],[712,'|'],[730,'mag'],[760.5,'br'],[786,'|'],
[857.5,'<div class="fld d-flex align-items-center justify-content-between ps-1" style="color:#14305f"><span class="lbl" data-w="101">键入一个商品/周期</span><svg width="8" height="8" class="me-1"><use href="#chev"/></svg></div>',131],[944,'clk'],[968,'dn',14],[983,'|'],
[1057.5,'<div class="fld g d-flex align-items-center justify-content-between ps-1 pe-2" style="color:#234a8f"><span class="lbl" data-w="60">As is (5 分)</span><svg width="8" height="8"><use href="#chev"/></svg></div>',133],
[1210.5,'<div class="fld d-flex align-items-center justify-content-end"><svg width="28" height="16" fill="none" stroke="#6b88c4"><path d="M3 2H13V14H3Z" fill="#d9d1d6"/><path d="M16 6H21L18.500 9Z" fill="#14305f"/></svg></div>',167],[1307,'tbl'],[1325,'|'],[1345,'fl'],[1371.5,'<span class="lbl" data-w="24">跳转</span>',24],[1392,'|'],[1413,'al'],[1439,'dot'],[1464,'ar'],[1497,'ar'],[1521,'dot'],[1543,'are'],[1560,'|'],
[1615.5,'<svg width="89" height="20"><path d="M0 9H89V11H0Z" fill="#d9d1d6"/><path d="M14 2H20V18H14Z" fill="#2d5fb4"/></svg>',89],[1667,'|'],[1685,'gear'],[1725,'<span class="lbl" data-w="50" style="color:#a9b1cf">多样模式</span>',50],[1757,'|'],[1777.5,'chk',31,'on']]);
// Menu captions: text, left edge, width
let m='',e=24;for(const [t,x,w] of [['文件(F)',31,39],['视图(V)',83,39],['插入(I)',136,34],['格式(O)',184,41],['窗口(W)',238,44],['帮助(H)',295,41]]){m+=`<div style="margin-left:${x-e}px;width:${w}px"><span class="lbl" data-w="${w}">${t}</span></div>`;e=x+w}
document.getElementById('menu').innerHTML+=m+`<svg class="ms-auto" width="126" height="24" viewBox="1794 25 126 24" fill="none" stroke="#6b88c4"><path d="M1795 33H1804M1795 33V42H1805V36M1803 33H1807M1807 31V35M1832 40H1837" /><path d="M1868 39L1870 34H1874L1872 40ZM1904 34L1909 40M1909 34L1904 40" stroke="#2d5fb4"/><path d="M1818 28V46M1853 28V46M1888 28V46" stroke="#e0dbde"/></svg>`;
// Data window
document.getElementById('rows').innerHTML=[['游标','',1],['日期','2022/12/1'],['时间','22:20'],['价格','3,754'],['SHFE.rb 0000','',1],['开盘价','3,733',2],['最高价','3,737',2],['最低价','3,733',2],['收盘价','3,737',2],['上涨量','16,037',2],['下跌量','15,230',2],['总成交量','31,267',2],['Bar编号','4,796',2]].map(r=>`<div class="drow d-flex justify-content-between align-items-center ${r[2]==1?'hd':''}"><span class="lbl"${r[0][0]=='S'?' data-w="68"':''}>${r[0]}</span><span class="v ${r[2]==2?'dim':''}">${r[1]}</span></div>`).join('');
// Candles: kind, x1, x2, open, close, then wick ranges
let c='';const B='#1c3a6e',W='#2b539c';
for(const [k,a,b,t,u,...w] of [['h',186,195,691,735,740,763],['d',228,237,690,690,676,733],['s',268,278,690,827,676,856],['n',309,319,767,825,753,763,829,840],['s',349,360,705,871,871,900],['s',390,401,856,871,827,885],['h',432,441,721,870],['d',473,482,720,720,707,780],['h',514,523,645,734,616,642,737,750],['s',554,565,644,751,754,765],['s',758,769,798,841],['n',800,809,0,0,806,810,845,870],['n',841,849,0,0,806,825],['n',882,891,0,0,804,811],['n',1332,1340,0,0,808,826],['s',1412,1423,798,817],['h',1454,1463,798,810],['v',1790,1790,224,310]]){
 const mid=(a+b)/2;for(let i=0;i<w.length;i+=2)c+=`<path d="M${mid} ${w[i]}V${w[i+1]}" stroke="${W}" stroke-width="1"/>`;
 if(k=='s')c+=`<path d="M${a} ${t}H${b}V${u}H${a}Z" fill="${B}"/>`;
 if(k=='h')c+=`<path d="M${a}.5 ${t}V${u}M${b}.5 ${t}V${u}" stroke="#d9d1d6" stroke-dasharray="1 3"/>`;
 if(k=='v')c+=`<path d="M${a}.5 ${t}V${u}" stroke="#d9d1d6" stroke-dasharray="1 3"/>`;
 if(k=='d')c+=`<path d="M${a} ${t}.5H${b}" stroke="${W}"/>`;}
c+='<path d="M309 767h1M317 767h1M318 772h1M809 812V837M318 822h1M317 825h1" stroke="#d9d1d6" stroke-dasharray="1 3"/>';
c+='<path d="M1866 216H1920V238H1866Z" fill="#142a50"/><g fill="#8ba5d8">';
for(let i=0;i<25;i++)c+=`<text x="1868" y="${(210+30.24*i).toFixed(1)}" textLength="26">3,${770-2*i}</text>`;
[['15:00',328],['21:10',410],['21:20',491],['21:30',573],['21:40',654],['21:50',736],['22:00',818],['22:10',900],['22:20',981],['22:30',1063],['22:40',1145],['22:50',1227],['23:00',1309],['02',1342],['09:10',1391],['09:20',1472],['09:30',1554],['09:40',1636],['09:50',1718],['10:00',1800]].forEach(([t,x])=>c+=`<text x="${x}" y="952.5" text-anchor="middle">${t}</text>`);
c+='</g><g fill="#2b4f92"><path d="M179 164H211V177H179ZM216 164H237V177H216Z" fill="#8ea6d4"/><text x="242" y="174" textLength="65">SHFE.rb 0000</text><text x="352" y="174" textLength="84">螺纹 s00000 5 分</text><text x="489" y="174" textLength="36">成交量</text><text x="532" y="174" textLength="30">SHFE.</text></g><g fill="none" stroke="#2d5fb4"><rect x="313.500" y="164.500" width="12" height="12" rx="2"/><rect x="331.500" y="164.500" width="13" height="12" rx="2"/><rect x="446.500" y="164.500" width="12" height="12" rx="2"/><rect x="463.500" y="164.500" width="18" height="12" rx="2"/><path d="M1897 187H1912M1901 184L1897 187L1901 190M1908 184L1912 187L1908 190" stroke-width="1.500"/></g><g fill="#d9d1d6"><path d="M316 169H323L319.500 173ZM338 169H344L341 173ZM449 169H456L452.500 173ZM474 169H480L477 173Z"/><text x="465" y="174.500">R</text><text x="333" y="174" font-size="8">F</text><text x="184" y="174.500" fill="#eee">SA</text></g>';
document.getElementById('chart').innerHTML=c;
// Paint palette
let p='<path d="M0 1H218V67H0Z" fill="#d9d1d6"/>';
[['#080804','#7d99cd','#080804','#080804','#5f5b5d','#d9d1d6','#254c91','#2d5fb4','#2d5fb4','#7d99cd'],['#fbfbfb','#93a9d2','#1b345c','#d9d1d6','#d9d1d6','#e8e4e6','#7186b3','#ddd6da','#5b80c2','#ddd6da'],Array(10).fill('#f8f6f7')].forEach((r,j)=>r.forEach((f,i)=>p+=`<rect x="${(1.5+21.8*i).toFixed(1)}" y="${3+22*j}" width="17.500" height="18" fill="${f}"/>`));
document.getElementById('palette').innerHTML=p;
// Track captions out to their measured widths
document.querySelectorAll('[data-w]').forEach(s=>{const n=[...s.textContent].length,w=s.offsetWidth;s.style.letterSpacing=((+s.dataset.w-w)/n).toFixed(3)+'px'});
</script>
<script src="https://cdn.jsdelivr.net/npm/bootstrap@5.3.0/dist/js/bootstrap.bundle.min.js"></script>
</body>
</html>
